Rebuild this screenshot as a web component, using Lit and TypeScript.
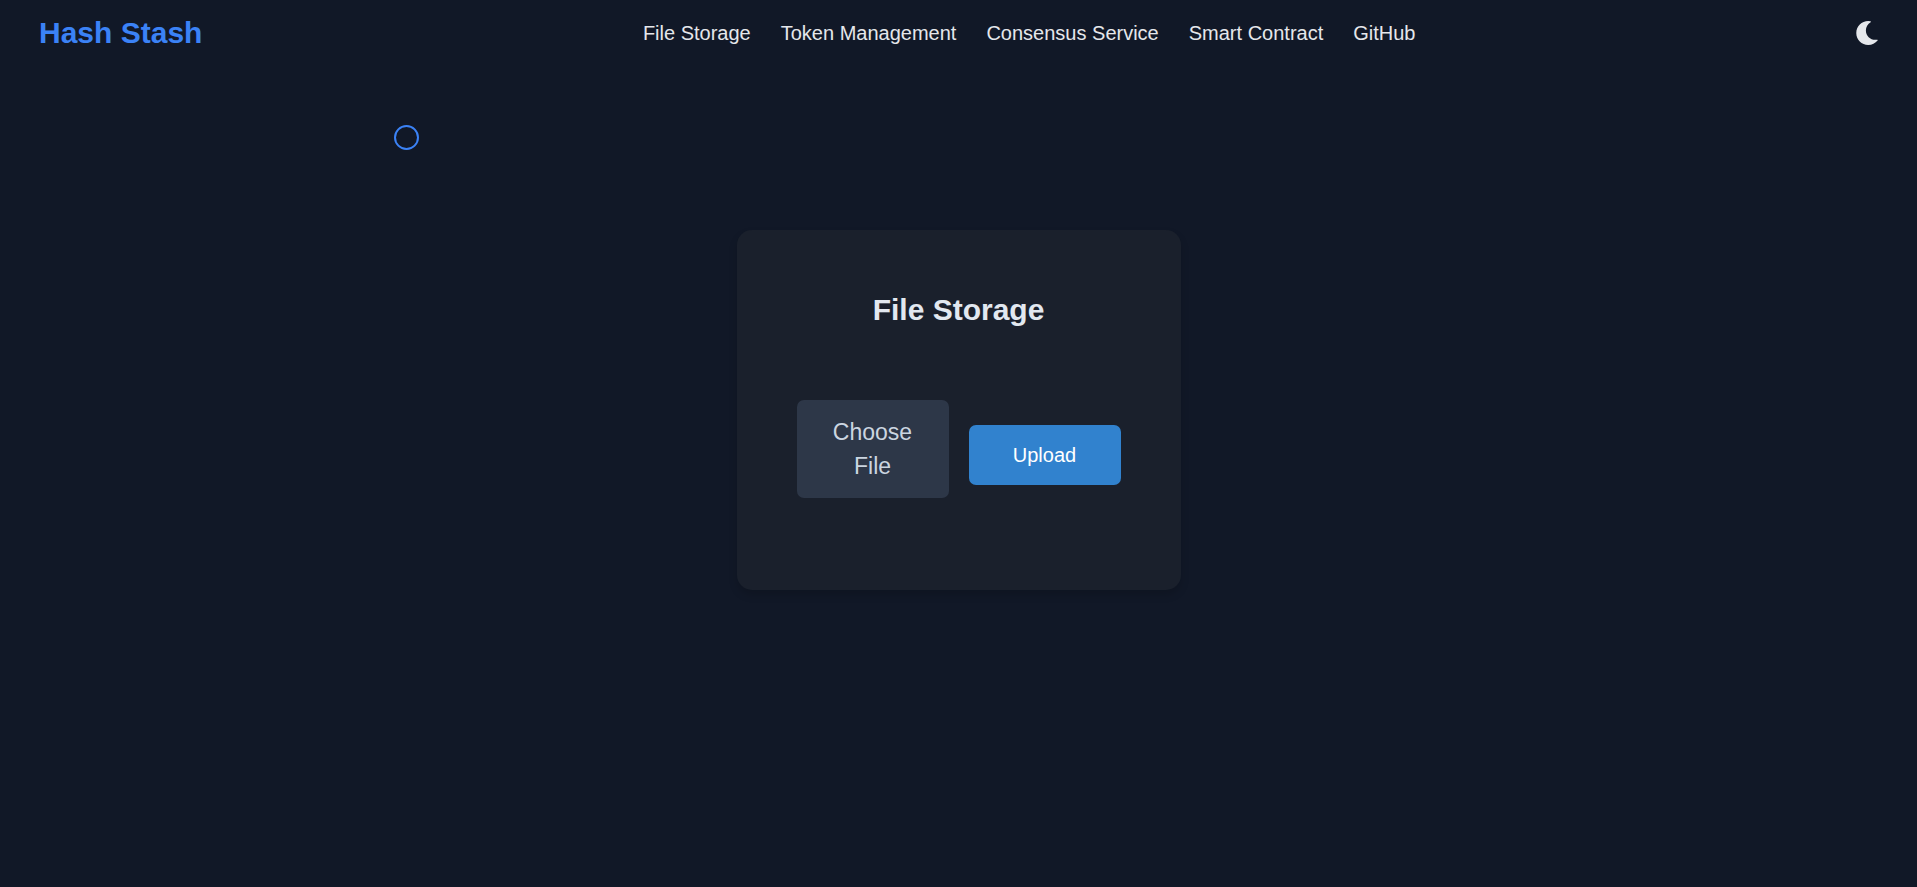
import { LitElement, html, css } from "lit";
import { customElement, property, state } from "lit/decorators.js";

interface NavItem {
  label: string;
  href: string;
}

const NAV_ITEMS: NavItem[] = [
  { label: "File Storage", href: "#file-storage" },
  { label: "Token Management", href: "#token-management" },
  { label: "Consensus Service", href: "#consensus-service" },
  { label: "Smart Contract", href: "#smart-contract" },
  { label: "GitHub", href: "#github" },
];

@customElement("site-header")
export class SiteHeader extends LitElement {
  static styles = css`
    :host {
      display: block;
    }
    .bar {
      display: flex;
      align-items: center;
      justify-content: space-between;
      padding: 12px 39px;
    }
    .brand {
      color: #3b82f6;
      font-size: 30px;
      font-weight: 700;
      line-height: 42px;
      text-decoration: none;
    }
    .links {
      display: flex;
      flex-wrap: wrap;
      gap: 10px 30px;
    }
    .link {
      color: #e5e7eb;
      font-size: 20px;
      line-height: 30px;
      text-decoration: none;
    }
    .theme {
      display: flex;
      padding: 0;
      border: 0;
      background: none;
      color: #e5e7eb;
      cursor: pointer;
    }
    .moon {
      display: block;
      width: 22px;
      height: 24px;
      fill: currentColor;
    }
  `;

  @property({ attribute: false }) items: NavItem[] = [];

  render() {
    return html`
      <header class="bar">
        <a class="brand" href="#home">Hash Stash</a>
        <nav class="links" aria-label="Main">
          ${this.items.map(
            (item) => html`<a class="link" href=${item.href}>${item.label}</a>`
          )}
        </nav>
        <button class="theme" type="button" aria-label="Toggle theme">
          <svg class="moon" viewBox="27 0 458 512" aria-hidden="true">
            <path
              d="M283.211 512c78.962 0 151.079-35.925 198.857-94.792 7.068-8.708-.639-21.43-11.562-19.35-124.203 23.654-238.262-71.576-238.262-196.954 0-72.222 38.662-138.635 101.498-174.394 9.686-5.512 7.25-20.197-3.756-22.23A258.156 258.156 0 0 0 283.211 0c-141.309 0-256 114.511-256 256 0 141.309 114.511 256 256 256z"
            />
          </svg>
        </button>
      </header>
    `;
  }
}

@customElement("file-upload-card")
export class FileUploadCard extends LitElement {
  static styles = css`
    :host {
      display: block;
    }
    .card {
      box-sizing: border-box;
      max-width: 444px;
      margin: 0 auto;
      padding: 60px 60px 80px;
      border-radius: 15px;
      background: #1a202c;
      box-shadow: 0 5px 8px rgba(0, 0, 0, 0.15);
    }
    .title {
      margin: 0 0 70px;
      color: #e2e8f0;
      font-size: 30px;
      font-weight: 700;
      line-height: 40px;
      text-align: center;
    }
    .form {
      display: grid;
      grid-template-columns: 1fr 1fr;
      gap: 20px;
      align-items: center;
    }
    .picker {
      padding-bottom: 12px;
    }
    .file {
      position: absolute;
      width: 1px;
      height: 1px;
      opacity: 0;
    }
    .choose {
      display: block;
      padding: 15px 30px;
      border-radius: 7px;
      background: #2d3748;
      color: #cbd5e0;
      font-size: 23px;
      line-height: 34px;
      text-align: center;
      cursor: pointer;
    }
    .upload {
      padding: 15px 30px;
      border: 0;
      border-radius: 7px;
      background: #3182ce;
      color: #fff;
      font: inherit;
      font-size: 20px;
      line-height: 30px;
      cursor: pointer;
    }
  `;

  @state() private fileName = "";

  private onPick(event: Event) {
    const input = event.target as HTMLInputElement;
    this.fileName = input.files?.[0]?.name ?? "";
  }

  render() {
    return html`
      <section class="card">
        <h2 class="title">File Storage</h2>
        <form class="form" @submit=${(e: Event) => e.preventDefault()}>
          <div class="picker">
            <input class="file" id="file" type="file" @change=${this.onPick} />
            <label class="choose" for="file">${this.fileName || "Choose File"}</label>
          </div>
          <button class="upload" type="submit">Upload</button>
        </form>
      </section>
    `;
  }
}

@customElement("app-root")
export class AppRoot extends LitElement {
  static styles = css`
    :host {
      display: block;
      min-height: 100vh;
      background: #111827;
      font-family: "Liberation Sans", Arial, sans-serif;
    }
    .main {
      padding: 164px 20px 40px;
    }
    .cursor {
      position: absolute;
      top: 125px;
      left: 394px;
      box-sizing: border-box;
      width: 25px;
      height: 25px;
      border: 2px solid #3b82f6;
      border-radius: 50%;
      pointer-events: none;
    }
  `;

  render() {
    return html`
      <site-header .items=${NAV_ITEMS}></site-header>
      <main class="main">
        <file-upload-card></file-upload-card>
      </main>
      <div class="cursor" aria-hidden="true"></div>
    `;
  }
}
